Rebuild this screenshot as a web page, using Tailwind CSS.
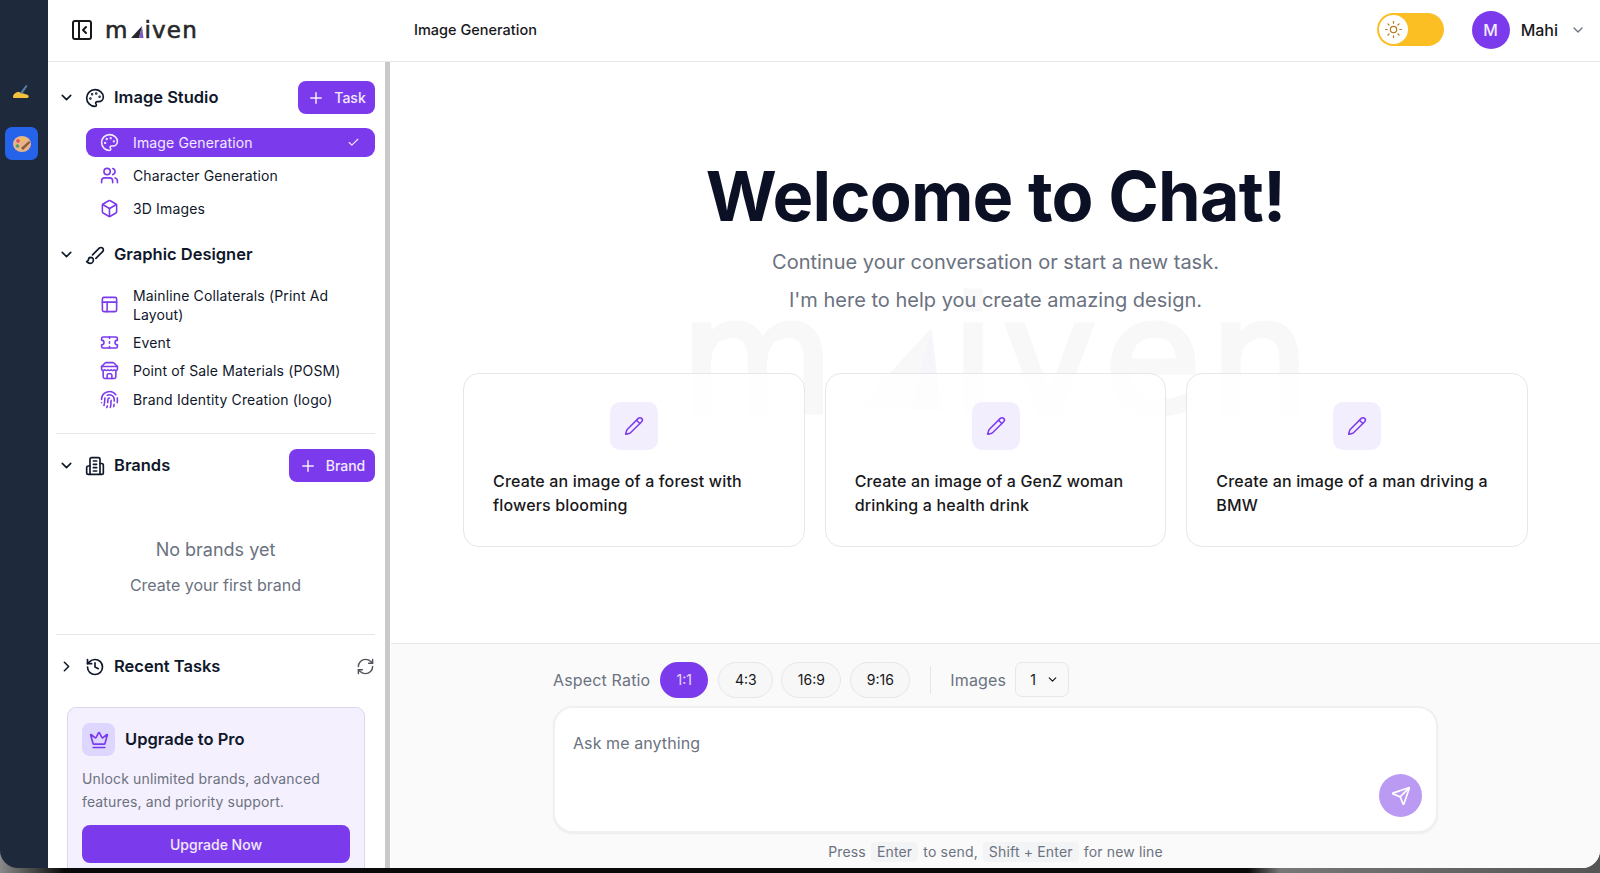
<!DOCTYPE html>
<html lang="en">
<head>
    <meta charset="UTF-8">
    <meta name="viewport" content="width=device-width, initial-scale=1.0">
    <title>Maiven - Image Generation</title>
    <script src="https://cdn.jsdelivr.net/npm/@tailwindcss/browser@4"></script>
</head>
<body class="font-[family-name:Inter] overflow-hidden">
<div class="h-[873px] w-[1600px] bg-[linear-gradient(90deg,#8a8a8a_0%,#0a0a0a_4%,#0a0a0a_78%,#777_80%,#555_100%)]">
    <div class="h-[868px] flex rounded-b-[18px] overflow-hidden">

        <!-- Left rail -->
        <div class="w-[48px] shrink-0 bg-[#1e293b] flex flex-col pt-[77px]">
            <div class="h-[30px] w-[42px] flex items-center justify-center">
                <svg class="w-[18px] h-[18px]" viewBox="0 0 18 18"><path d="M1 14c0-3 3-5 6-5l3 1 6 2c1 1 1 3-1 3H3c-1 0-2 0-2-1z" fill="#f5c33b"/><path d="M8 10l6-8 1.500 1-5.500 8z" fill="#5b7fa6"/></svg>
            </div>
            <div class="ml-[5px] mt-[20px] w-[33px] h-[33px] rounded-[7px] bg-[#2563eb] flex items-center justify-center">
                <svg class="w-[20px] h-[20px]" viewBox="0 0 20 20"><ellipse cx="10" cy="10" rx="9" ry="8" fill="#e8b48a"/><circle cx="6" cy="7" r="1.800" fill="#e5484d"/><circle cx="11" cy="5.500" r="1.800" fill="#f5c33b"/><circle cx="5.500" cy="12" r="1.800" fill="#4f9d69"/><path d="M9 14L17 7l1.500 1.500L11 16z" fill="#8d5a3b"/></svg>
            </div>
        </div>

        <div class="flex-1 flex flex-col min-w-0 bg-white">
            <!-- Header -->
            <header class="h-[62px] shrink-0 border-b border-[#e5e7eb] flex items-center pb-[2px]">
                <div class="w-[342px] shrink-0 flex items-center pl-[22px]">
                    <svg class="w-[24px] h-[24px] text-[#18181b]" viewBox="0 0 24 24" fill="none" stroke="currentColor" stroke-width="2" stroke-linecap="round" stroke-linejoin="round"><rect width="18" height="18" x="3" y="3" rx="2"/><path d="M9 3v18"/><path d="m16 15-3-3 3-3"/></svg>
                    <div class="ml-[11px] flex items-end text-[23px] leading-[24px] tracking-[0.05em] text-[#27272a] [-webkit-text-stroke:0.6px_#27272a] font-[family-name:'DejaVu_Sans']">
                        <span>m</span>
                        <svg class="ml-[2px] mr-[1px] mb-[4px] w-[13px] h-[12px] shrink-0" viewBox="0 0 13 12"><path d="M0 12L11 0 8 12z" fill="#27272a"/><path d="M8 12l3-12 1.500 12z" fill="#7c5cc4"/></svg>
                        <span>iven</span>
                    </div>
                </div>
                <div class="ml-[24px] text-[14.500px] font-medium text-[#18181b]">Image Generation</div>
                <div class="ml-auto mr-[14px] flex items-center">
                    <div class="w-[67px] h-[33px] rounded-full bg-[#fbbf24] flex items-center pl-[2px]">
                        <div class="w-[29px] h-[29px] rounded-full bg-white flex items-center justify-center">
                            <svg class="w-[19px] h-[19px] text-[#b7791f]" viewBox="0 0 24 24" fill="none" stroke="currentColor" stroke-width="1.500" stroke-linecap="round"><circle cx="12" cy="12" r="4"/><path d="M12 2v2"/><path d="M12 20v2"/><path d="m4.930 4.930 1.410 1.410"/><path d="m17.660 17.660 1.410 1.410"/><path d="M2 12h2"/><path d="M20 12h2"/><path d="m6.340 17.660-1.410 1.410"/><path d="m19.070 4.930-1.410 1.410"/></svg>
                        </div>
                    </div>
                    <div class="ml-[28px] w-[38px] h-[38px] rounded-full bg-[#7c3aed] text-white/90 flex items-center justify-center text-[16px] font-medium">M</div>
                    <span class="ml-[11px] text-[16px] font-medium text-[#18181b]">Mahi</span>
                    <svg class="ml-[12px] w-[16px] h-[16px] text-[#6b7280]" viewBox="0 0 24 24" fill="none" stroke="currentColor" stroke-width="2" stroke-linecap="round" stroke-linejoin="round"><path d="m6 9 6 6 6-6"/></svg>
                </div>
            </header>

            <div class="flex-1 flex min-h-0">
                <!-- Sidebar -->
                <aside class="w-[337px] shrink-0 overflow-hidden pl-[8px] pr-[10px] pt-[19px] text-[#0f172a]">
                    <div class="h-[33px] flex items-center">
                        <svg class="ml-[2px] w-[17px] h-[17px]" viewBox="0 0 24 24" fill="none" stroke="currentColor" stroke-width="2.200" stroke-linecap="round" stroke-linejoin="round"><path d="m6 9 6 6 6-6"/></svg>
                        <svg class="ml-[10px] w-[20px] h-[20px]" viewBox="0 0 24 24" fill="none" stroke="currentColor" stroke-width="2" stroke-linecap="round" stroke-linejoin="round"><circle cx="13.500" cy="6.500" r=".5" fill="currentColor"/><circle cx="17.500" cy="10.500" r=".5" fill="currentColor"/><circle cx="8.500" cy="7.500" r=".5" fill="currentColor"/><circle cx="6.500" cy="12.500" r=".5" fill="currentColor"/><path d="M12 2C6.500 2 2 6.500 2 12s4.500 10 10 10c.926 0 1.648-.746 1.648-1.688 0-.437-.18-.835-.437-1.125-.29-.289-.438-.652-.438-1.125a1.640 1.640 0 0 1 1.668-1.668h1.996c3.051 0 5.555-2.503 5.555-5.554C21.965 6.012 17.461 2 12 2z"/></svg>
                        <span class="ml-[9px] text-[16.500px] font-semibold">Image Studio</span>
                        <button class="ml-auto w-[77px] h-[33px] rounded-lg bg-[#7c3aed] text-white/90 text-[14px] font-medium flex items-center justify-center gap-[9px]">
                            <svg class="w-[18px] h-[18px]" viewBox="0 0 24 24" fill="none" stroke="currentColor" stroke-width="2" stroke-linecap="round"><path d="M5 12h14"/><path d="M12 5v14"/></svg>Task
                        </button>
                    </div>

                    <div class="ml-[30px] mt-[14px] flex flex-col gap-[4px] text-[14px] tracking-[0.01em]">
                        <div class="h-[29px] rounded-[9px] bg-[#7c3aed] text-white/90 flex items-center pl-[14px] pr-[15px]">
                            <svg class="w-[19px] h-[19px] shrink-0" viewBox="0 0 24 24" fill="none" stroke="currentColor" stroke-width="2" stroke-linecap="round" stroke-linejoin="round"><circle cx="13.500" cy="6.500" r=".5" fill="currentColor"/><circle cx="17.500" cy="10.500" r=".5" fill="currentColor"/><circle cx="8.500" cy="7.500" r=".5" fill="currentColor"/><circle cx="6.500" cy="12.500" r=".5" fill="currentColor"/><path d="M12 2C6.500 2 2 6.500 2 12s4.500 10 10 10c.926 0 1.648-.746 1.648-1.688 0-.437-.18-.835-.437-1.125-.29-.289-.438-.652-.438-1.125a1.640 1.640 0 0 1 1.668-1.668h1.996c3.051 0 5.555-2.503 5.555-5.554C21.965 6.012 17.461 2 12 2z"/></svg>
                            <span class="ml-[14px]">Image Generation</span>
                            <svg class="ml-auto w-[13px] h-[13px]" viewBox="0 0 24 24" fill="none" stroke="currentColor" stroke-width="2" stroke-linecap="round" stroke-linejoin="round"><path d="M20 6 9 17l-5-5"/></svg>
                        </div>
                        <div class="h-[29px] flex items-center pl-[14px]">
                            <svg class="w-[19px] h-[19px] shrink-0 text-[#7c3aed]" viewBox="0 0 24 24" fill="none" stroke="currentColor" stroke-width="2" stroke-linecap="round" stroke-linejoin="round"><path d="M16 21v-2a4 4 0 0 0-4-4H6a4 4 0 0 0-4 4v2"/><circle cx="9" cy="7" r="4"/><path d="M22 21v-2a4 4 0 0 0-3-3.870"/><path d="M16 3.130a4 4 0 0 1 0 7.750"/></svg>
                            <span class="ml-[14px]">Character Generation</span>
                        </div>
                        <div class="h-[29px] flex items-center pl-[14px]">
                            <svg class="w-[19px] h-[19px] shrink-0 text-[#7c3aed]" viewBox="0 0 24 24" fill="none" stroke="currentColor" stroke-width="2" stroke-linecap="round" stroke-linejoin="round"><path d="M21 8a2 2 0 0 0-1-1.730l-7-4a2 2 0 0 0-2 0l-7 4A2 2 0 0 0 3 8v8a2 2 0 0 0 1 1.730l7 4a2 2 0 0 0 2 0l7-4A2 2 0 0 0 21 16Z"/><path d="m3.300 7 8.700 5 8.700-5"/><path d="M12 22V12"/></svg>
                            <span class="ml-[14px]">3D Images</span>
                        </div>
                    </div>

                    <div class="mt-[15px] h-[33px] flex items-center">
                        <svg class="ml-[2px] w-[17px] h-[17px]" viewBox="0 0 24 24" fill="none" stroke="currentColor" stroke-width="2.200" stroke-linecap="round" stroke-linejoin="round"><path d="m6 9 6 6 6-6"/></svg>
                        <svg class="ml-[10px] w-[20px] h-[20px]" viewBox="0 0 24 24" fill="none" stroke="currentColor" stroke-width="2" stroke-linecap="round" stroke-linejoin="round"><path d="m9.060 11.900 8.070-8.060a2.850 2.850 0 1 1 4.030 4.030l-8.060 8.080"/><path d="M7.070 14.940c-1.660 0-3 1.350-3 3.020 0 1.330-2.500 1.520-2 2.020 1.080 1.100 2.490 2.020 4 2.020 2.200 0 4-1.800 4-4.040a3.010 3.010 0 0 0-3-3.020z"/></svg>
                        <span class="ml-[9px] text-[16.500px] font-semibold">Graphic Designer</span>
                    </div>

                    <div class="ml-[30px] mt-[14px] text-[14px] tracking-[0.01em]">
                        <div class="h-[39px] flex items-center pl-[14px]">
                            <svg class="w-[19px] h-[19px] shrink-0 text-[#7c3aed]" viewBox="0 0 24 24" fill="none" stroke="currentColor" stroke-width="2" stroke-linecap="round" stroke-linejoin="round"><rect width="18" height="18" x="3" y="3" rx="2"/><path d="M3 9h18"/><path d="M9 21V9"/></svg>
                            <span class="ml-[14px] leading-[19px] w-[210px]">Mainline Collaterals (Print Ad Layout)</span>
                        </div>
                        <div class="mt-[4px] h-[28px] flex items-center pl-[14px]">
                            <svg class="w-[19px] h-[19px] shrink-0 text-[#7c3aed]" viewBox="0 0 24 24" fill="none" stroke="currentColor" stroke-width="2" stroke-linecap="round" stroke-linejoin="round"><path d="M2 9a3 3 0 0 1 0 6v2a2 2 0 0 0 2 2h16a2 2 0 0 0 2-2v-2a3 3 0 0 1 0-6V7a2 2 0 0 0-2-2H4a2 2 0 0 0-2 2Z"/><path d="M12 5v2"/><path d="M12 17v2"/><path d="M12 11v2"/></svg>
                            <span class="ml-[14px]">Event</span>
                        </div>
                        <div class="h-[29px] flex items-center pl-[14px]">
                            <svg class="w-[19px] h-[19px] shrink-0 text-[#7c3aed]" viewBox="0 0 24 24" fill="none" stroke="currentColor" stroke-width="2" stroke-linecap="round" stroke-linejoin="round"><path d="m2 7 4.410-4.410A2 2 0 0 1 7.830 2h8.340a2 2 0 0 1 1.420.59L22 7"/><path d="M4 12v8a2 2 0 0 0 2 2h12a2 2 0 0 0 2-2v-8"/><path d="M15 22v-4a2 2 0 0 0-2-2h-2a2 2 0 0 0-2 2v4"/><path d="M2 7h20"/><path d="M22 7v3a2 2 0 0 1-2 2a2.700 2.700 0 0 1-1.590-.63.7.7 0 0 0-.82 0A2.700 2.700 0 0 1 16 12a2.700 2.700 0 0 1-1.590-.63.7.7 0 0 0-.82 0A2.700 2.700 0 0 1 12 12a2.700 2.700 0 0 1-1.590-.63.7.7 0 0 0-.82 0A2.700 2.700 0 0 1 8 12a2.700 2.700 0 0 1-1.590-.63.7.7 0 0 0-.82 0A2.700 2.700 0 0 1 4 12a2 2 0 0 1-2-2V7"/></svg>
                            <span class="ml-[14px]">Point of Sale Materials (POSM)</span>
                        </div>
                        <div class="h-[28px] flex items-center pl-[14px]">
                            <svg class="w-[19px] h-[19px] shrink-0 text-[#7c3aed]" viewBox="0 0 24 24" fill="none" stroke="currentColor" stroke-width="2" stroke-linecap="round" stroke-linejoin="round"><path d="M12 10a2 2 0 0 0-2 2c0 1.020-.1 2.510-.26 4"/><path d="M14 13.120c0 2.380 0 6.380-1 8.880"/><path d="M17.290 21.020c.12-.6.430-2.300.5-3.020"/><path d="M2 12a10 10 0 0 1 18-6"/><path d="M2 16h.01"/><path d="M21.800 16c.2-2 .131-5.354 0-6"/><path d="M5 19.500C5.500 18 6 15 6 12a6 6 0 0 1 .34-2"/><path d="M8.650 22c.21-.66.450-1.320.570-2"/><path d="M9 6.800a6 6 0 0 1 9 5.200v2"/></svg>
                            <span class="ml-[14px]">Brand Identity Creation (logo)</span>
                        </div>
                    </div>

                    <div class="mt-[20px] border-t border-[#e5e7eb]"></div>

                    <div class="mt-[15px] h-[33px] flex items-center">
                        <svg class="ml-[2px] w-[17px] h-[17px]" viewBox="0 0 24 24" fill="none" stroke="currentColor" stroke-width="2.200" stroke-linecap="round" stroke-linejoin="round"><path d="m6 9 6 6 6-6"/></svg>
                        <svg class="ml-[10px] w-[20px] h-[20px]" viewBox="0 0 24 24" fill="none" stroke="currentColor" stroke-width="2" stroke-linecap="round" stroke-linejoin="round"><path d="M6 22V4a2 2 0 0 1 2-2h8a2 2 0 0 1 2 2v18Z"/><path d="M6 12H4a2 2 0 0 0-2 2v6a2 2 0 0 0 2 2h2"/><path d="M18 9h2a2 2 0 0 1 2 2v9a2 2 0 0 1-2 2h-2"/><path d="M10 6h4"/><path d="M10 10h4"/><path d="M10 14h4"/><path d="M10 18h4"/></svg>
                        <span class="ml-[9px] text-[16.500px] font-semibold">Brands</span>
                        <button class="ml-auto w-[86px] h-[33px] rounded-lg bg-[#7c3aed] text-white/90 text-[14px] font-medium flex items-center justify-center gap-[9px]">
                            <svg class="w-[18px] h-[18px]" viewBox="0 0 24 24" fill="none" stroke="currentColor" stroke-width="2" stroke-linecap="round"><path d="M5 12h14"/><path d="M12 5v14"/></svg>Brand
                        </button>
                    </div>

                    <div class="h-[152px] flex flex-col items-center text-[#6b7280]">
                        <div class="mt-[55px] text-[18px] leading-[26px]">No brands yet</div>
                        <div class="mt-[10px] text-[16px] leading-[24px]">Create your first brand</div>
                    </div>

                    <div class="border-t border-[#e5e7eb]"></div>

                    <div class="mt-[15px] h-[33px] flex items-center">
                        <svg class="ml-[2px] w-[17px] h-[17px]" viewBox="0 0 24 24" fill="none" stroke="currentColor" stroke-width="2.200" stroke-linecap="round" stroke-linejoin="round"><path d="m9 18 6-6-6-6"/></svg>
                        <svg class="ml-[10px] w-[20px] h-[20px]" viewBox="0 0 24 24" fill="none" stroke="currentColor" stroke-width="2" stroke-linecap="round" stroke-linejoin="round"><path d="M3 12a9 9 0 1 0 9-9 9.750 9.750 0 0 0-6.740 2.740L3 8"/><path d="M3 3v5h5"/><path d="M12 7v5l4 2"/></svg>
                        <span class="ml-[9px] text-[16.500px] font-semibold">Recent Tasks</span>
                        <svg class="ml-auto w-[19px] h-[19px] text-[#52525b]" viewBox="0 0 24 24" fill="none" stroke="currentColor" stroke-width="1.800" stroke-linecap="round" stroke-linejoin="round"><path d="M3 12a9 9 0 0 1 9-9 9.750 9.750 0 0 1 6.740 2.740L21 8"/><path d="M21 3v5h-5"/><path d="M21 12a9 9 0 0 1-9 9 9.750 9.750 0 0 1-6.740-2.740L3 16"/><path d="M8 16H3v5"/></svg>
                    </div>

                    <div class="ml-[11px] mr-[10px] mt-[24px] h-[200px] rounded-[9px] border border-[#ddd6ee] bg-[#f5f0fe] px-[14px] pt-[15px]">
                        <div class="flex items-center">
                            <div class="w-[33px] h-[33px] rounded-[8px] bg-[#ddd6fe] flex items-center justify-center">
                                <svg class="w-[20px] h-[20px] text-[#7c3aed]" viewBox="0 0 24 24" fill="none" stroke="currentColor" stroke-width="2" stroke-linecap="round" stroke-linejoin="round"><path d="M11.562 3.266a.5.5 0 0 1 .876 0L15.390 8.870a1 1 0 0 0 1.516.294L21.183 5.500a.5.5 0 0 1 .798.519l-2.834 10.246a1 1 0 0 1-.956.734H5.810a1 1 0 0 1-.957-.734L2.020 6.020a.5.5 0 0 1 .798-.519l4.276 3.664a1 1 0 0 0 1.516-.294z"/><path d="M5 21h14"/></svg>
                            </div>
                            <span class="ml-[10px] text-[16.500px] font-semibold">Upgrade to Pro</span>
                        </div>
                        <p class="mt-[11px] text-[14px] leading-[23px] text-[#6b7280] tracking-[0.01em]">Unlock unlimited brands, advanced features, and priority support.</p>
                        <button class="mt-[12px] w-full h-[38px] rounded-lg bg-[#7c3aed] text-white/90 text-[14px] font-medium">Upgrade Now</button>
                    </div>
                </aside>

                <div class="w-[5px] shrink-0 bg-[#c9c9c9]"></div>

                <!-- Main -->
                <main class="flex-1 ml-[1px] flex flex-col min-w-0">
                    <section class="relative h-[581px] shrink-0 overflow-hidden flex flex-col items-center">
                        <div class="absolute left-[289px] top-[260px] flex items-start text-[158px] leading-[70px] tracking-[8px] text-[#f8f8f9] [-webkit-text-stroke:5px_#f8f8f9] font-[family-name:'DejaVu_Sans']">
                            <span>m</span>
                            <svg class="ml-[14px] mr-[6px] mt-[4px] w-[89px] h-[86px] shrink-0" viewBox="0 0 13 12"><path d="M0 12L11 0 8 12z" fill="#f8f8f9"/><path d="M8 12l3-12 1.500 12z" fill="#f7f5fc"/></svg>
                            <span>iven</span>
                        </div>
                        <h1 class="relative mt-[92px] text-[68.500px] leading-[86px] font-bold tracking-[-0.012em] text-[#0b1025]">Welcome to Chat!</h1>
                        <p class="relative mt-[3px] text-[20px] leading-[38px] text-[#6b7280]">Continue your conversation or start a new task.</p>
                        <p class="relative text-[20px] leading-[38px] text-[#6b7280]">I'm here to help you create amazing design.</p>
                        <div class="relative mt-[54px] flex gap-[20px] w-[1065px]">
                            <div class="flex-1 h-[174px] rounded-2xl border border-[#e5e7eb] bg-white/80 px-[29px] pt-[28px]">
                                <div class="mx-auto w-[48px] h-[48px] rounded-[10px] bg-[#f3eefe] flex items-center justify-center">
                                    <svg class="w-[20px] h-[20px] text-[#7c3aed]" viewBox="0 0 24 24" fill="none" stroke="currentColor" stroke-width="1.800" stroke-linecap="round" stroke-linejoin="round"><path d="M21.174 6.812a1 1 0 0 0-3.986-3.987L3.842 16.174a2 2 0 0 0-.5.83l-1.321 4.352a.5.5 0 0 0 .623.622l4.353-1.320a2 2 0 0 0 .83-.497z"/><path d="m15 5 4 4"/></svg>
                                </div>
                                <p class="mt-[19px] text-[16px] leading-[24px] font-medium tracking-[0.01em] text-[#18181b]">Create an image of a forest with flowers blooming</p>
                            </div>
                            <div class="flex-1 h-[174px] rounded-2xl border border-[#e5e7eb] bg-white/80 px-[29px] pt-[28px]">
                                <div class="mx-auto w-[48px] h-[48px] rounded-[10px] bg-[#f3eefe] flex items-center justify-center">
                                    <svg class="w-[20px] h-[20px] text-[#7c3aed]" viewBox="0 0 24 24" fill="none" stroke="currentColor" stroke-width="1.800" stroke-linecap="round" stroke-linejoin="round"><path d="M21.174 6.812a1 1 0 0 0-3.986-3.987L3.842 16.174a2 2 0 0 0-.5.83l-1.321 4.352a.5.5 0 0 0 .623.622l4.353-1.320a2 2 0 0 0 .83-.497z"/><path d="m15 5 4 4"/></svg>
                                </div>
                                <p class="mt-[19px] text-[16px] leading-[24px] font-medium tracking-[0.01em] text-[#18181b]">Create an image of a GenZ woman drinking a health drink</p>
                            </div>
                            <div class="flex-1 h-[174px] rounded-2xl border border-[#e5e7eb] bg-white/80 px-[29px] pt-[28px]">
                                <div class="mx-auto w-[48px] h-[48px] rounded-[10px] bg-[#f3eefe] flex items-center justify-center">
                                    <svg class="w-[20px] h-[20px] text-[#7c3aed]" viewBox="0 0 24 24" fill="none" stroke="currentColor" stroke-width="1.800" stroke-linecap="round" stroke-linejoin="round"><path d="M21.174 6.812a1 1 0 0 0-3.986-3.987L3.842 16.174a2 2 0 0 0-.5.83l-1.321 4.352a.5.5 0 0 0 .623.622l4.353-1.320a2 2 0 0 0 .83-.497z"/><path d="m15 5 4 4"/></svg>
                                </div>
                                <p class="mt-[19px] text-[16px] leading-[24px] font-medium tracking-[0.01em] text-[#18181b]">Create an image of a man driving a BMW</p>
                            </div>
                        </div>
                    </section>

                    <section class="flex-1 border-t border-[#e5e7eb] bg-[#fafafa] flex flex-col items-center">
                        <div class="w-[885px] mt-[17px] h-[37px] flex items-center text-[14px]">
                            <span class="text-[16px] tracking-[0.01em] text-[#6b7280]">Aspect Ratio</span>
                            <span class="ml-[10px] w-[48px] h-[36px] rounded-full bg-[#7c3aed] text-white/80 flex items-center justify-center">1:1</span>
                            <span class="ml-[10px] w-[55px] h-[36px] rounded-full border border-[#e5e7eb] bg-[#f7f7f7] text-[#18181b] flex items-center justify-center">4:3</span>
                            <span class="ml-[8px] w-[60px] h-[36px] rounded-full border border-[#e5e7eb] bg-[#f7f7f7] text-[#18181b] flex items-center justify-center">16:9</span>
                            <span class="ml-[9px] w-[60px] h-[36px] rounded-full border border-[#e5e7eb] bg-[#f7f7f7] text-[#18181b] flex items-center justify-center">9:16</span>
                            <span class="ml-[20px] w-px h-[28px] bg-[#e5e7eb]"></span>
                            <span class="ml-[19px] text-[16px] tracking-[0.01em] text-[#6b7280]">Images</span>
                            <span class="ml-[9px] w-[54px] h-[35px] rounded-[7px] border border-[#e5e7eb] bg-[#f9f9f9] text-[#18181b] flex items-center pl-[14px]">1
                                <svg class="ml-auto mr-[9px] w-[13px] h-[13px]" viewBox="0 0 24 24" fill="none" stroke="currentColor" stroke-width="2.200" stroke-linecap="round" stroke-linejoin="round"><path d="m6 9 6 6 6-6"/></svg>
                            </span>
                        </div>
                        <div class="relative w-[885px] h-[127px] mt-[8px] rounded-[20px] border-2 border-[#f0f0f1] bg-white pl-[18px] pt-[23px] text-[16px] leading-[24px] tracking-[0.005em] text-[#6b7280] shadow-[0_1px_2px_rgba(0,0,0,0.06)]">
                            Ask me anything
                            <div class="absolute right-[14px] bottom-[14px] w-[43px] h-[43px] rounded-full bg-[#bb9af3] flex items-center justify-center">
                                <svg class="w-[20px] h-[20px] text-white" viewBox="0 0 24 24" fill="none" stroke="currentColor" stroke-width="2" stroke-linecap="round" stroke-linejoin="round"><path d="M14.536 21.686a.5.5 0 0 0 .937-.024l6.500-19a.496.496 0 0 0-.635-.635l-19 6.500a.5.5 0 0 0-.024.937l7.930 3.180a2 2 0 0 1 1.112 1.110z"/><path d="m21.854 2.147-10.940 10.939"/></svg>
                            </div>
                        </div>
                        <div class="mt-[9px] flex items-center text-[14px] leading-[20px] tracking-[0.012em] text-[#6b7280]">
                            Press<span class="mx-[5px] px-[6px] rounded-[4px] bg-[#f3f4f6]">Enter</span>to send,<span class="mx-[5px] px-[6px] rounded-[4px] bg-[#f3f4f6]">Shift + Enter</span>for new line
                        </div>
                    </section>
                </main>
            </div>
        </div>
    </div>
</div>
</body>
</html>
